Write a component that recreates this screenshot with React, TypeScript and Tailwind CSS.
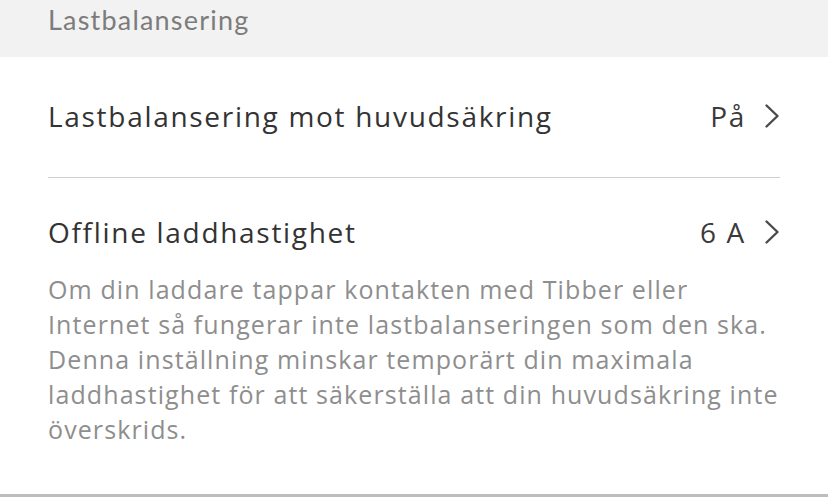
function Chevron() {
  return (
    <svg width="16" height="26" viewBox="0 0 16 26" fill="none" className="shrink-0">
      <polyline points="2.5,2.5 13.5,13 2.5,23.5" stroke="#4a4a4a" strokeWidth="2.4" strokeLinecap="round" strokeLinejoin="round" />
    </svg>
  );
}

export default function App() {
  return (
    <div className="w-[828px] h-[497px] bg-white flex flex-col overflow-hidden font-['Open_Sans',sans-serif]">
      {/* Section header */}
      <div className="h-[57px] bg-[#f2f2f2] px-12 pt-[3px] font-['Lato',sans-serif] text-[27px] leading-[34px] tracking-[1.2px] text-[#7c7c7c]">
        Lastbalansering
      </div>

      <div className="flex-1 flex flex-col px-12">
        {/* Row 1 */}
        <div className="h-[121px] flex items-center justify-between border-b border-[#cfcfcf] pb-[2px]">
          <span className="text-[28px] tracking-[1.7px] text-[#333333]">Lastbalansering mot huvudsäkring</span>
          <span className="flex items-center gap-[18px] text-[28px] tracking-[1.7px] text-[#3a3a3a]">
            På
            <Chevron />
          </span>
        </div>

        {/* Row 2 */}
        <div className="pt-[33px] flex items-center justify-between">
          <span className="text-[28px] tracking-[1.7px] text-[#333333]">Offline laddhastighet</span>
          <span className="flex items-center gap-[18px] text-[28px] tracking-[1.7px] text-[#3a3a3a]">
            6 A
            <Chevron />
          </span>
        </div>
        <p className="mt-[19px] text-[25px] leading-[35px] tracking-[1.1px] text-[#8e8e8e] whitespace-nowrap">
          Om din laddare tappar kontakten med Tibber eller
          <br />
          Internet så fungerar inte lastbalanseringen som den ska.
          <br />
          Denna inställning minskar temporärt din maximala
          <br />
          laddhastighet för att säkerställa att din huvudsäkring inte
          <br />
          överskrids.
        </p>
      </div>

      <div className="h-[3px] bg-[#bdbdbd]" />
    </div>
  );
}
